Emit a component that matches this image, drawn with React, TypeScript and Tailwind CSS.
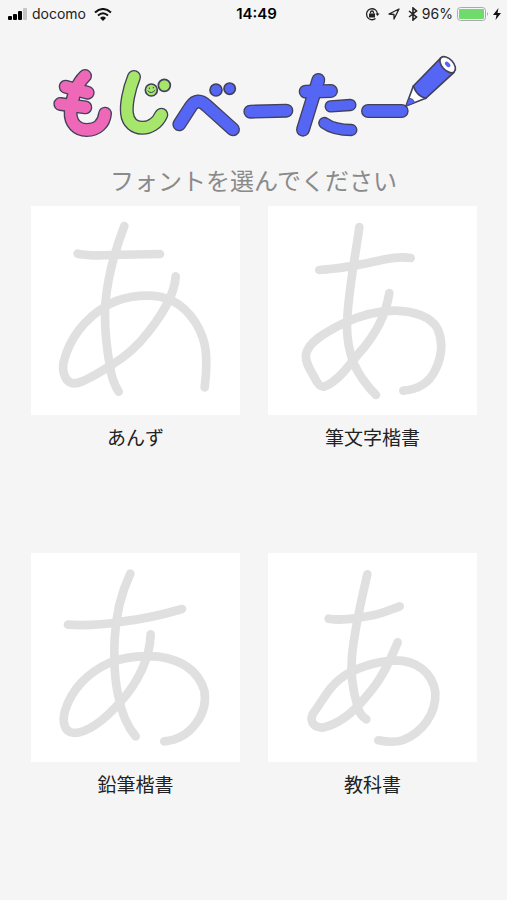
import React from "react";

type Sample = { name: string; viewBox: string; strokes: string[] };

const samples: Sample[] = [
  {
    name: "あんず",
    viewBox: "18 17 627 627",
    strokes: [
      "M158 160 C190 166 220 166 255 164 L405 161",
      "M298 77 C272 145 248 225 241 310 C237 380 246 450 255 500 Q262 545 281 574",
      "M452 228 C450 275 415 345 345 425 C310 462 285 478 250 500 C215 521 180 544 152 549 C120 551 110 515 116 485 C132 420 175 355 250 313 C300 285 385 275 440 300 C500 330 535 395 542 450 C546 490 543 530 539 561",
    ],
  },
  {
    name: "筆文字楷書",
    viewBox: "19 16 627 627",
    strokes: [
      "M173 208 C230 205 300 192 370 176 Q415 167 447 172",
      "M293 79 C282 160 262 260 257 350 C253 400 262 450 276 488 Q300 540 343 583",
      "M383 277 C373 340 345 400 290 460 C260 498 225 545 187 558 C175 560 165 545 157 528 C145 505 130 485 133 462 C138 425 190 395 245 368 C300 343 355 330 400 330 C460 331 510 350 528 385 C545 425 540 470 520 510 C500 550 465 567 425 570",
    ],
  },
  {
    name: "鉛筆楷書",
    viewBox: "18 22 627 627",
    strokes: [
      "M129 237 C180 240 240 236 290 228 C350 221 410 208 471 190",
      "M316 84 C285 150 272 210 269 280 C266 350 268 400 280 450 C288 495 305 540 332 572",
      "M377 266 C375 335 340 410 285 470 C245 515 195 560 147 562 C115 560 112 525 120 495 C140 430 190 380 250 353 C300 333 360 328 400 333 C470 343 520 375 538 435 C550 500 500 580 418 587",
    ],
  },
  {
    name: "教科書",
    viewBox: "19 22 627 627",
    strokes: [
      "M201 219 C240 226 280 218 320 211 C355 207 385 192 414 182",
      "M317 86 C300 160 280 240 271 330 C265 390 275 440 288 483 Q295 510 314 521",
      "M408 290 C385 345 360 400 320 445 C285 490 235 535 182 546 C150 545 142 520 158 498 C180 470 200 425 235 400 C270 370 340 347 400 344 C465 344 512 380 521 440 C525 505 480 560 425 583 Q395 593 350 584",
    ],
  },
];

function Outlined({ paths, width, color }: { paths: string[]; width: number; color: string }) {
  return (
    <g fill="none" strokeLinecap="round" strokeLinejoin="round">
      {paths.map((d) => (
        <path key={"edge" + d} d={d} stroke="#42405a" strokeWidth={width} />
      ))}
      {paths.map((d) => (
        <path key={"fill" + d} d={d} stroke={color} strokeWidth={width - 8} />
      ))}
    </g>
  );
}

function Logo() {
  const blue = "#5566f5";
  return (
    <svg role="img" aria-label="もじべーたー" viewBox="30 6 1221 264" className="block w-full">
      <Outlined
        color="#ef68b8"
        width={42}
        paths={[
          "M135 78 C112 100 97 135 92 185 C90 220 112 240 140 240 C172 240 192 220 195 191",
          "M77 110 L143 128",
          "M61 162 L136 172",
        ]}
      />
      <Outlined
        color="#a5e66b"
        width={42}
        paths={["M282 81 C266 120 258 165 261 190 C267 246 340 248 364 194"]}
      />
      <g fill="#a5e66b" stroke="#42405a" strokeWidth="5">
        <circle cx="334" cy="120" r="18" />
        <circle cx="373" cy="106" r="18" />
      </g>
      <g fill="none" stroke="#42405a" strokeWidth="3" strokeLinecap="round">
        <path d="M328 114 V116 M340 112 V114 M324 123 Q334 134 345 121" />
      </g>
      <Outlined color={blue} width={42} paths={["M418 223 L452 170 Q472 140 500 167 L579 238"]} />
      <g fill={blue} stroke="#42405a" strokeWidth="5">
        <circle cx="528" cy="120" r="18" />
        <circle cx="569" cy="116" r="17" />
      </g>
      <Outlined color={blue} width={42} paths={["M631 185 L739 182"]} />
      <Outlined color={blue} width={42} paths={["M835 90 L789 239", "M797 125 L873 123"]} />
      <Outlined color={blue} width={37} paths={["M872 169 L931 165"]} />
      <Outlined color={blue} width={37} paths={["M853 219 Q882 240 934 240"]} />
      <Outlined color={blue} width={42} paths={["M984 183 L1085 183"]} />
      <g stroke="#42405a" strokeWidth="5" strokeLinejoin="round">
        <path d="M1120 108 L1098 168 L1157 145 Z" fill="#ffffff" />
        <path d="M1107 144 L1098 168 L1124 158 Q1121 145 1107 144 Z" fill={blue} strokeWidth="2" />
        <path d="M1202 24 L1242 67 L1157 145 Q1130 138 1120 108 Z" fill={blue} />
        <ellipse cx="1223" cy="44" rx="29" ry="17" transform="rotate(47 1223 44)" fill="#ffffff" />
        <ellipse cx="1223" cy="43" rx="10" ry="6" transform="rotate(47 1223 43)" fill={blue} stroke="none" />
      </g>
    </svg>
  );
}

function StatusBar() {
  return (
    <header className="grid h-7 grid-cols-3 items-center pr-1.5 pl-2 font-['Inter',sans-serif] text-sm text-[#222222]">
      <div className="flex items-center gap-1">
        <svg viewBox="0 0 20 12" className="h-3 w-5" aria-hidden="true">
          <rect x="0" y="8" width="4" height="4" rx="1" />
          <rect x="5" y="6" width="4" height="6" rx="1" />
          <rect x="10" y="3" width="4" height="9" rx="1" />
          <rect x="15" y="0" width="4" height="12" rx="1" fill="#c5c5c5" />
        </svg>
        <span>docomo</span>
        <svg viewBox="0 0 18 13" className="ml-1 h-[13px] w-[18px]" fill="none" stroke="#111" strokeWidth="2" aria-hidden="true">
          <path d="M1 4.500 Q9 -2.500 17 4.500" />
          <path d="M4 7.500 Q9 3 14 7.500" />
          <path d="M6 10 Q9 7.200 12 10 L9 13 Z" fill="#111" stroke="none" />
        </svg>
      </div>
      <time className="pl-1 text-center text-[15px] font-semibold text-black">14:49</time>
      <div className="flex items-center justify-end gap-1">
        <svg viewBox="0 0 15 14" className="h-[14px] w-[15px]" fill="none" stroke="#222" strokeWidth="1.300" aria-hidden="true">
          <path d="M10.500 11.500 A5.500 5.500 0 1 1 12.500 7" />
          <path d="M10.500 6.500 H14.500 L12.500 9 Z" fill="#222" stroke="none" />
          <rect x="4" y="6.500" width="6" height="4" fill="#222" stroke="none" />
          <path d="M5.500 6.500 V5.500 A1.500 1.500 0 0 1 8.500 5.500 V6.500" />
        </svg>
        <svg viewBox="0 0 12 12" className="mx-1 h-3 w-3" fill="none" stroke="#222" strokeWidth="1.300" strokeLinejoin="round" aria-hidden="true">
          <path d="M11 1 L1 6 L6 6.500 V11 Z" />
        </svg>
        <svg viewBox="0 0 10 14" className="h-[14px] w-[10px]" fill="none" stroke="#222" strokeWidth="1.600" aria-hidden="true">
          <path d="M1 4 L8.500 10 L5 13 V1 L8.500 4 L1 10" />
        </svg>
        <span>96%</span>
        <svg viewBox="0 0 32 14" className="h-[14px] w-8" aria-hidden="true">
          <rect x="0.500" y="0.500" width="28" height="13" rx="3" fill="none" stroke="#aaa" />
          <rect x="2" y="2" width="25" height="10" rx="1" fill="#6edb6c" />
          <path d="M30 5 Q32 7 30 9 Z" fill="#aaa" />
        </svg>
        <svg viewBox="0 0 8 12" className="h-3 w-2" aria-hidden="true">
          <path d="M5.500 0 L0 7 H3.500 L2.500 12 L8 5 H4.500 Z" fill="#111" />
        </svg>
      </div>
    </header>
  );
}

export default function App() {
  return (
    <div className="min-h-screen bg-[#f5f5f5] font-['Noto_Sans_CJK_JP',sans-serif]">
      <StatusBar />
      <main>
        <h1 className="px-[50px] pt-6">
          <Logo />
        </h1>
        <p className="mt-6 text-center text-2xl text-[#8a8a8a]">フォントを選んでください</p>
        <div className="mt-2.5 grid grid-cols-2 gap-x-7 gap-y-[102px] pr-[30px] pl-[31px]">
          {samples.map((sample) => (
            <button key={sample.name} type="button" className="block text-center">
              <svg viewBox={sample.viewBox} className="block w-full bg-white" aria-hidden="true">
                <g fill="none" stroke="#e0e0e0" strokeWidth="26" strokeLinecap="round" strokeLinejoin="round">
                  <path d={sample.strokes.join(" ")} />
                </g>
              </svg>
              <span className="mt-2 block text-[19px] leading-7 text-[#222222]">{sample.name}</span>
            </button>
          ))}
        </div>
      </main>
    </div>
  );
}
